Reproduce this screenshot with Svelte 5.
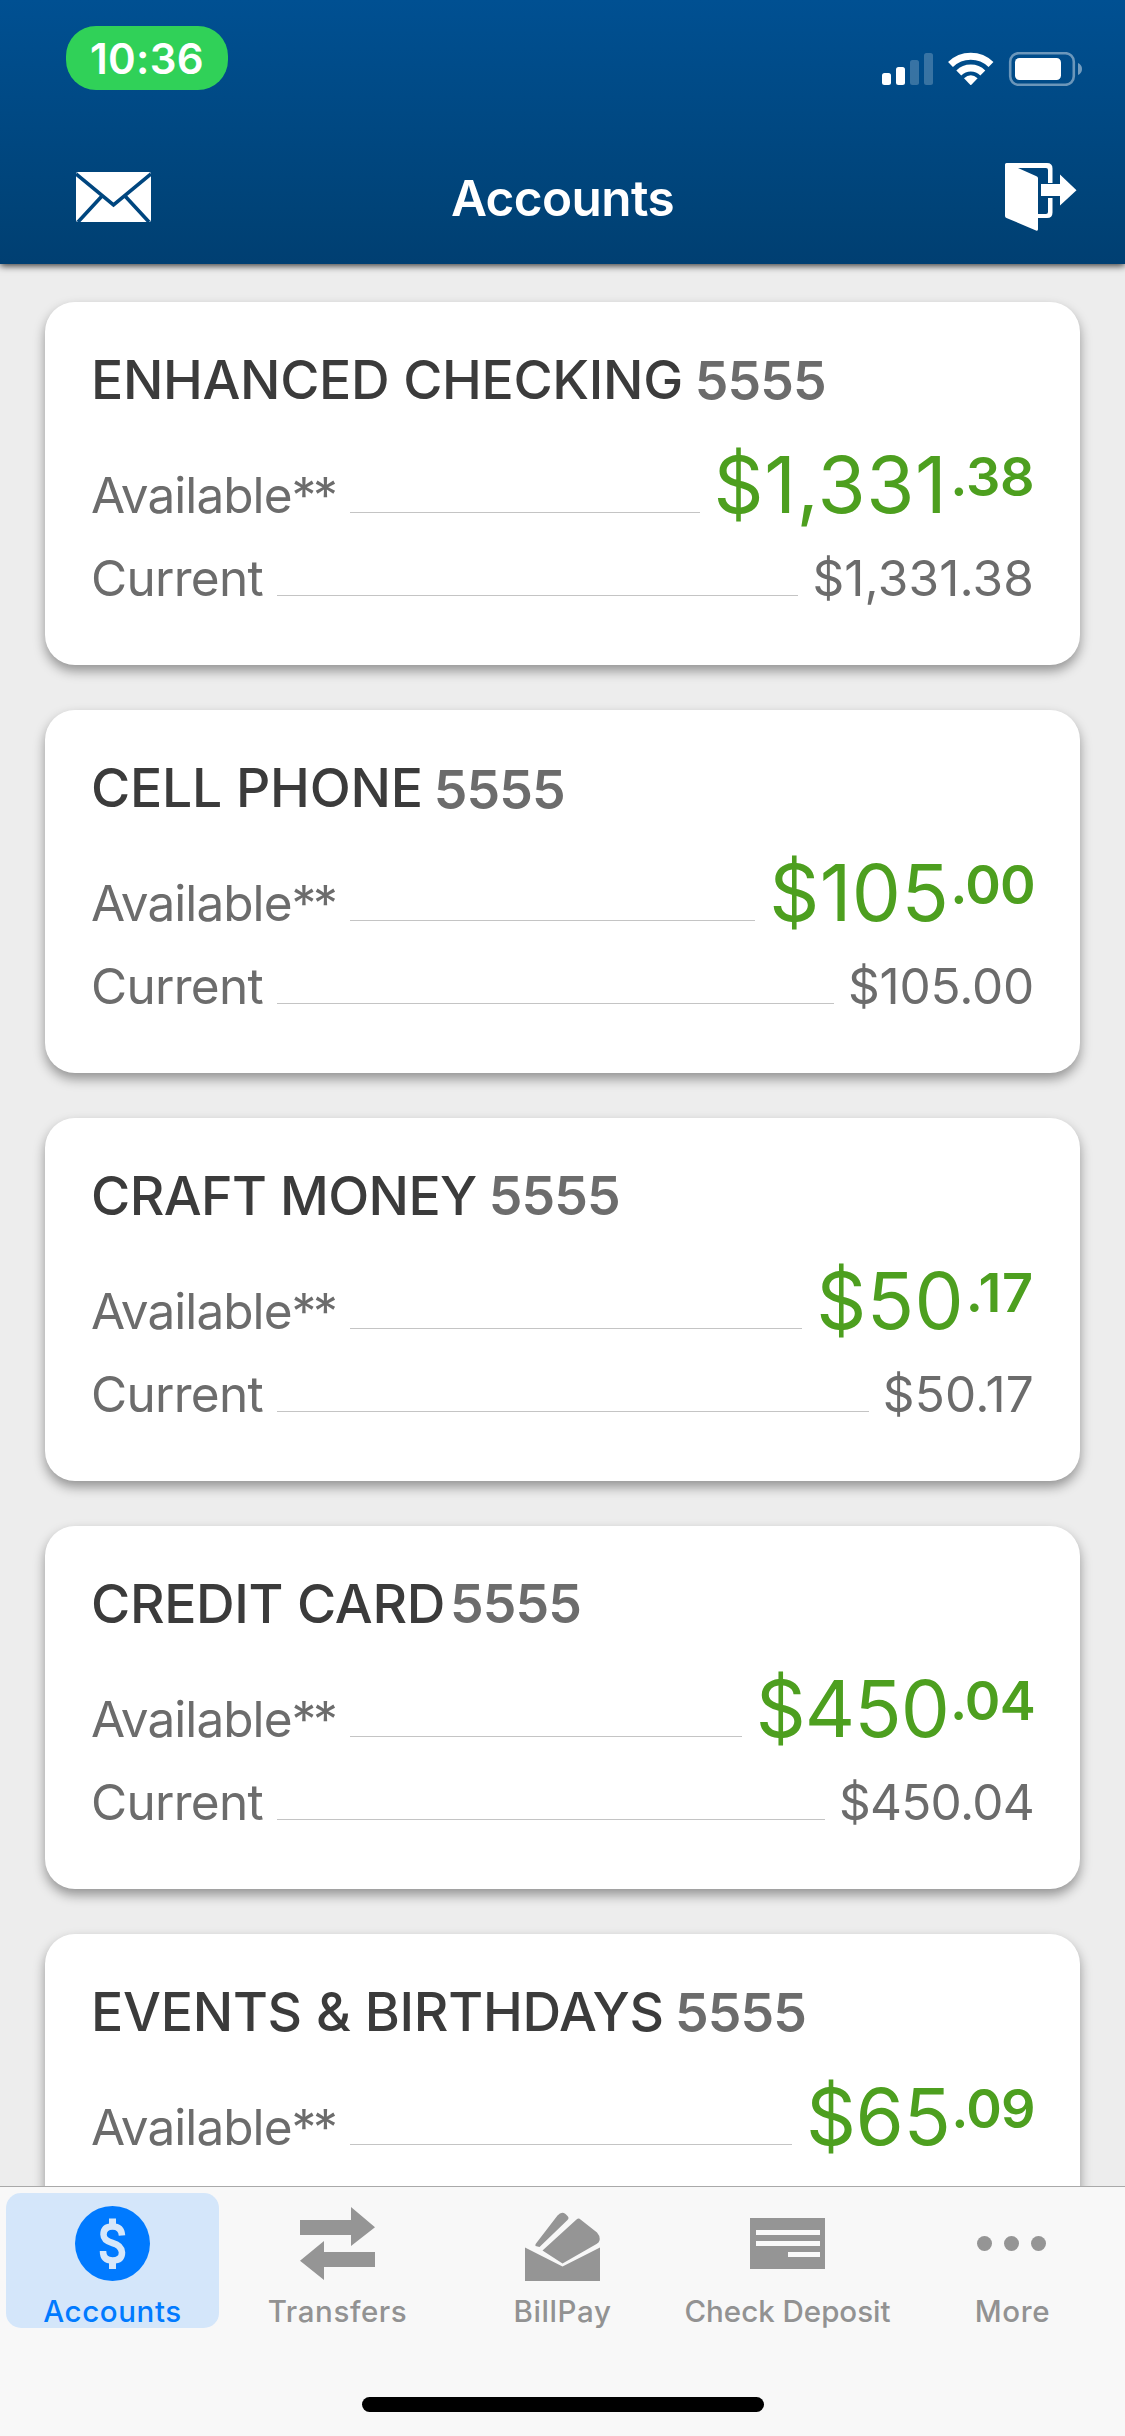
<script>
  const accounts = [
    { name: 'ENHANCED CHECKING', whole: '$1,331', cents: '.38', fit: 'checking' },
    { name: 'CELL PHONE', whole: '$105', cents: '.00', fit: 'phone' },
    { name: 'CRAFT MONEY', whole: '$50', cents: '.17', fit: 'craft' },
    { name: 'CREDIT CARD', whole: '$450', cents: '.04', fit: 'credit' },
    { name: 'EVENTS & BIRTHDAYS', whole: '$65', cents: '.09', fit: 'events' }
  ];
</script>

<div class="screen">
  <header>
    <div class="status">
      <div class="time"><span>10:36</span></div>
      <svg class="indicators" width="200" height="34" viewBox="882 52 200 34" fill="#fff">
        <rect x="882" y="73" width="9" height="12" rx="2.5" />
        <rect x="896" y="67" width="9" height="18" rx="2.5" />
        <g opacity=".22">
          <rect x="910" y="60" width="9" height="25" rx="2.5" />
          <rect x="924" y="53" width="9" height="32" rx="2.5" />
        </g>
        <g fill="none" stroke="#fff" stroke-width="7">
          <path d="M950.5 64.500a29 29 0 0 1 40.500 0" />
          <path d="M958.800 73a17 17 0 0 1 24 0" />
        </g>
        <path d="M964 78.300q6.800-6.200 13.600 0l-6.200 6.400q-.6.600-1.200 0z" />
        <rect x="1010.200" y="53.200" width="63.600" height="31.600" rx="8.500" fill="none" stroke="#fff" stroke-width="2.600" opacity=".42" />
        <rect x="1015" y="58" width="46" height="22" rx="4.500" />
        <path d="M1078 63q4 1.800 4 6t-4 6z" opacity=".45" />
      </svg>
    </div>
    <div class="nav">
      <svg width="75" height="50" viewBox="0 0 75 50">
        <rect width="75" height="50" rx="2" fill="#fff" />
        <path d="M0 2L37.500 33 75 2M26 24L2 50M49 24L73 50" fill="none" stroke="#00467f" stroke-width="3.600" />
      </svg>
      <h1>Accounts</h1>
      <svg width="72" height="69" viewBox="1005 163 72 69" fill="#fff">
        <path d="M1006.500 163H1047q5.500 0 5.500 5.500V183H1048v-13q0-2-2-2h-28l18.500 8.300q1.500.7 1.500 2v51q0 2-2 1.200L1006.500 218q-1.500-.6-1.500-2v-51.500q0-1.500 1.500-1.500z" />
        <path d="M1048 198h4.500v14.500q0 5.500-5.500 5.500h-9.500v-4h8.500q2 0 2-2z" />
        <path d="M1041 184h19v-9.500l16.500 15.700L1060 205.500V196h-19z" />
      </svg>
    </div>
  </header>

  <main>
    {#each accounts as a}
      <section class={a.fit}>
        <h2><span class="name">{a.name}</span><span class="num">5555</span></h2>
        <div class="row available">
          <span class="label">Available<span class="stars">**</span></span><i></i>
          <span class="money"><span class="whole">{a.whole}</span><span class="cents">{a.cents}</span></span>
        </div>
        <div class="row">
          <span class="label current">Current</span><i></i>
          <span class="amount">{a.whole}{a.cents}</span>
        </div>
      </section>
    {/each}
  </main>

  <footer>
    <nav>
      <div class="tab active">
        <svg width="75" height="75" viewBox="0 0 75 75">
          <circle cx="37.500" cy="37.500" r="37.500" fill="#007aff" />
          <path d="M47 29.500Q46.500 20.500 37.500 20.500T28.500 28.500Q28.500 34.500 37.500 37T47 46.500Q47 54.500 37.500 54.500T28 45" fill="none" stroke="#d6e7fa" stroke-width="6.500" />
          <path d="M34 12.500h7v9h-7zM34 54h7v9h-7z" fill="#d6e7fa" />
        </svg>
        <span>Accounts</span>
      </div>
      <div class="tab">
        <svg width="75" height="75" viewBox="0 0 75 75" fill="#959595">
          <path d="M0 14h51V1l24 20.300L51 40V29H0zM75 46H24V35L0 54.700 24 74V61h51z" />
        </svg>
        <span>Transfers</span>
      </div>
      <div class="tab">
        <svg width="75" height="75" viewBox="0 0 75 75" fill="#959595">
          <path d="M0 41.500L37.500 60.500 75 41.500V75H0z" />
          <path d="M11 37.500L32.500 9.500q4-4.500 8-1.500l2 2q2 2 0 4L14.500 41l-4-1q-.5-1.500.5-2.500z" />
          <path d="M17.500 44.500L51.500 13.500q2.200-1.800 4 0L72 26.500q3.500 4 2.500 8-.5 2-3 3.500L37.500 57.500z" />
        </svg>
        <span>BillPay</span>
      </div>
      <div class="tab">
        <svg width="75" height="75" viewBox="0 0 75 75">
          <path d="M0 12h75v51H0z" fill="#959595" />
          <path d="M6 24h64v5H6zM6 35h64v5H6zM38 46h32v5H38z" fill="#f9f9f9" />
        </svg>
        <span class="tight">Check Deposit</span>
      </div>
      <div class="tab">
        <svg width="75" height="75" viewBox="0 0 75 75" fill="#959595">
          <circle cx="9.500" cy="37.500" r="7.500" /><circle cx="36.500" cy="37.500" r="7.500" /><circle cx="63.500" cy="37.500" r="7.500" />
        </svg>
        <span>More</span>
      </div>
    </nav>
    <div class="home"></div>
  </footer>
</div>

<style>
  :global(body) { margin: 0; background: #ededed; }
  .screen {
    width: 1125px; height: 2436px; overflow: hidden;
    display: flex; flex-direction: column;
    background: #ededed; font-family: Inter, "Liberation Sans", sans-serif;
  }
  svg { display: block; flex: none; }
  header {
    height: 264px; flex: none; box-sizing: border-box; z-index: 1;
    background: linear-gradient(#005092, #004276 85%, #003f72);
    box-shadow: 0 2px 7px rgba(0, 0, 0, .75);
    display: flex; flex-direction: column;
  }
  .status { display: flex; justify-content: space-between; padding: 26px 43px 0 66px; height: 104px; }
  .time {
    width: 162px; height: 64px; border-radius: 30px; background: #30d158; color: #fff;
    box-sizing: border-box; padding-top: 1px;
    display: flex; align-items: center; justify-content: center;
    font-size: 42px; font-weight: 600; line-height: 64px; letter-spacing: .3px;
  }
  .indicators { margin-top: 26px; }
  .nav { display: grid; grid-template-columns: 1fr auto 1fr; align-items: center; padding: 0 48px; height: 134px; }
  .nav svg:first-child { margin-left: 28px; }
  .nav svg:last-child { justify-self: end; }
  h1 { margin: 0; padding-top: 2px; color: #fff; font-size: 49.500px; line-height: 60px; font-weight: 600; letter-spacing: -.6px; }
  main { flex: 1; min-height: 0; overflow: hidden; padding: 38px 45px 0; display: flex; flex-direction: column; gap: 45px; }
  section {
    flex: none; height: 363px; box-sizing: border-box; padding: 43px 46px 0; border-radius: 30px; background: #fff;
    box-shadow: 0 6px 12px rgba(0, 0, 0, .38);
  }
  h2 { margin: 0; display: flex; height: 70px; line-height: 70px; font-size: 53.500px; font-weight: 500; color: #3b3b3b; white-space: nowrap; }
  .name { letter-spacing: -.35px; }
  .num { color: #6c6c6c; font-weight: 600; letter-spacing: -.9px; padding-top: 1px; }
  .row { display: flex; align-items: baseline; height: 83px; line-height: 83px; color: #6c6c6c; font-size: 49.500px; white-space: nowrap; }
  .row i { flex: 1; height: 1px; background: #c4c4c4; margin: 0 14px 0 15px; }
  .label { letter-spacing: -.95px; }
  .label.current { letter-spacing: -.7px; margin-right: -1px; }
  .stars { letter-spacing: -3.300px; }
  .row.available { margin-top: 28px; height: 94px; }
  .money { display: flex; color: #4d9f1f; align-items: baseline; }
  .whole { font-size: 78px; }
  .cents { font-size: 54px; font-weight: 600; position: relative; top: -17px; letter-spacing: -.8px; margin: 0 -.8px 0 1px; }

  .checking .num { margin-left: 12px; }
  .checking .whole { letter-spacing: .6px; }
  .checking .cents { letter-spacing: -.3px; margin: 0 -.3px 0 3px; }
  .checking .amount { letter-spacing: .15px; }
  .phone .name { letter-spacing: -.25px; }
  .phone .num { margin-left: 11px; padding-top: 2px; }
  .phone .whole { letter-spacing: .4px; }
  .phone .amount { letter-spacing: -.2px; }
  .craft .name { letter-spacing: -.6px; }
  .craft .num { margin-left: 12px; padding-top: 0; }
  .craft .whole { letter-spacing: .4px; }
  .craft .cents { letter-spacing: .5px; margin: 0 .5px 0 1.500px; }
  .craft .amount { letter-spacing: .2px; }
  .credit .num { margin-left: 5px; padding-top: 0; }
  .credit .whole { letter-spacing: -1px; }
  .credit .amount { letter-spacing: -.7px; }
  .events .name { letter-spacing: -.25px; }
  .events .num { margin-left: 11px; }
  .events .whole { letter-spacing: -.5px; }

  footer { flex: none; height: 250px; box-sizing: border-box; border-top: 1px solid #a9a9a9; background: #f8f8f8; z-index: 1; }
  nav { display: grid; grid-template-columns: repeat(5, 225px); height: 142px; padding-top: 6px; box-sizing: border-box; }
  .tab { display: flex; flex-direction: column; align-items: center; height: 135px; padding-top: 13px; box-sizing: border-box; margin: 0 6px; color: #929292; font-size: 29.500px; font-weight: 500; line-height: 36px; letter-spacing: .6px; white-space: nowrap; }
  .tab span { margin-top: 12px; }
  .tab .tight { letter-spacing: 0; }
  .active { background: #d4e6fa; border-radius: 15px; color: #007aff; }
  .home { width: 402px; height: 15px; border-radius: 8px; background: #000; margin: 68px auto 0; }
</style>
